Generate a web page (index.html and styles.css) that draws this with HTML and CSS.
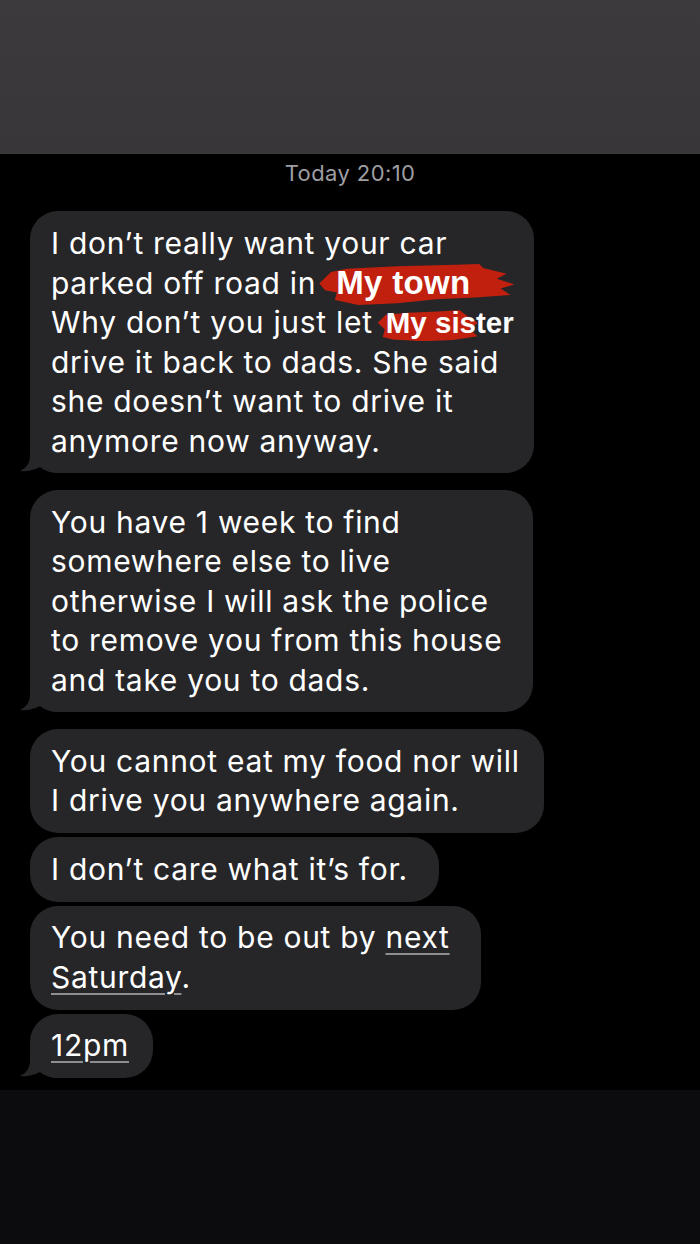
FILE: index.html
```html
<!DOCTYPE html>
<html lang="en">
<head>
    <meta charset="UTF-8">
    <meta name="viewport" content="width=device-width, initial-scale=1.0">
    <title>Messages</title>
    <link rel="stylesheet" href="styles.css">
</head>
<body>
    <div class="screen">
        <div class="top-bar"></div>

        <div class="thread">
            <div class="timestamp">Today 20:10</div>

            <div class="bubble tail snug">
                I don’t really want your car<br>
                parked off road in <span class="redact redact-town">My town</span><br>
                Why don’t you just let <span class="redact redact-sister">My sister</span><br>
                drive it back to dads. She said<br>
                she doesn’t want to drive it<br>
                anymore now anyway.
                <svg class="tail-shape" viewBox="0 0 40 30" width="40" height="30"><path d="M12 0 L12 12 C12 21 8 25 2 28 C9 29 16 27 22 24 C27 28 33 30 40 30 L40 0 Z"/></svg>
            </div>

            <div class="bubble tail gap roomy">
                You have 1 week to find<br>
                somewhere else to live<br>
                otherwise I will ask the police<br>
                to remove you from this house<br>
                and take you to dads.
                <svg class="tail-shape" viewBox="0 0 40 30" width="40" height="30"><path d="M12 0 L12 12 C12 21 8 25 2 28 C9 29 16 27 22 24 C27 28 33 30 40 30 L40 0 Z"/></svg>
            </div>

            <div class="bubble gap">
                You cannot eat my food nor will<br>
                I drive you anywhere again.
            </div>

            <div class="bubble roomy">
                I don’t care what it’s for.
            </div>

            <div class="bubble roomy">
                You need to be out by <span class="link">next</span><br>
                <span class="link">Saturday</span>.
            </div>

            <div class="bubble tail">
                <span class="link">12pm</span>
                <svg class="tail-shape" viewBox="0 0 40 30" width="40" height="30"><path d="M12 0 L12 12 C12 21 8 25 2 28 C9 29 16 27 22 24 C27 28 33 30 40 30 L40 0 Z"/></svg>
            </div>
        </div>

        <div class="bottom-bar"></div>
    </div>
</body>
</html>
```

FILE: styles.css
```css
body {
    margin: 0;
    background-color: #000;
    font-family: Inter, "Noto Sans", sans-serif;
}
.screen {
    height: 1244px;
    display: flex;
    flex-direction: column;
    overflow: hidden;
}
.top-bar {
    height: 154px;
    flex-shrink: 0;
    background: linear-gradient(#3d3a3e, #39363a);
}
.thread {
    flex: 1;
    display: flex;
    flex-direction: column;
    align-items: flex-start;
    padding: 0 0 0 30px;
}
.timestamp {
    align-self: stretch;
    margin-left: -30px;
    padding-top: 6px;
    height: 51px;
    text-align: center;
    font-size: 22px;
    letter-spacing: 0.4px;
    line-height: 26px;
    color: #9e9ea3;
}
.bubble {
    position: relative;
    isolation: isolate;
    background-color: #262629;
    color: #fff;
    border-radius: 28px;
    padding: 12.5px 24px 12.5px 21px;
    font-size: 30px;
    letter-spacing: 0.7px;
    line-height: 39.4px;
    white-space: nowrap;
    margin-bottom: 4px;
}
.bubble.gap {
    margin-top: 13px;
}
.bubble.snug {
    padding-right: 20px;
}
.bubble.roomy {
    padding-right: 31px;
}
.tail-shape {
    position: absolute;
    z-index: -1;
    left: -12px;
    bottom: 0;
    fill: #262629;
}
.link {
    text-decoration: underline;
    text-decoration-color: #8e8e93;
    text-decoration-thickness: 2px;
    text-underline-offset: 5px;
}
.redact {
    position: relative;
    font-family: "Liberation Sans", Arial, sans-serif;
    font-weight: bold;
    letter-spacing: 0.3px;
    z-index: 0;
}
.redact::before {
    content: "";
    position: absolute;
    z-index: -1;
    background-color: #c1200e;
}
.redact-town {
    font-size: 33px;
    margin-left: 11px;
}
.redact-town::before {
    left: -17px;
    right: -44px;
    top: 0;
    bottom: -4px;
    clip-path: polygon(0 48%, 6% 20%, 14% 12%, 40% 6%, 70% 2%, 82% 0, 84% 10%, 96% 24%, 91% 36%, 100% 50%, 93% 60%, 98% 76%, 80% 82%, 60% 86%, 40% 96%, 20% 100%, 8% 88%, 9% 70%, 3% 64%);
}
.redact-sister {
    font-size: 29.5px;
    letter-spacing: 0;
    margin-left: 4px;
}
.redact-sister::before {
    left: -8px;
    right: 36px;
    top: 4px;
    bottom: -2px;
    clip-path: polygon(0 40%, 8% 14%, 30% 8%, 60% 4%, 82% 0, 90% 20%, 100% 40%, 92% 62%, 100% 84%, 75% 96%, 45% 100%, 15% 94%, 5% 86%, 7% 62%);
}
.bottom-bar {
    height: 154px;
    flex-shrink: 0;
    background-color: #0c0c0e;
}
```
